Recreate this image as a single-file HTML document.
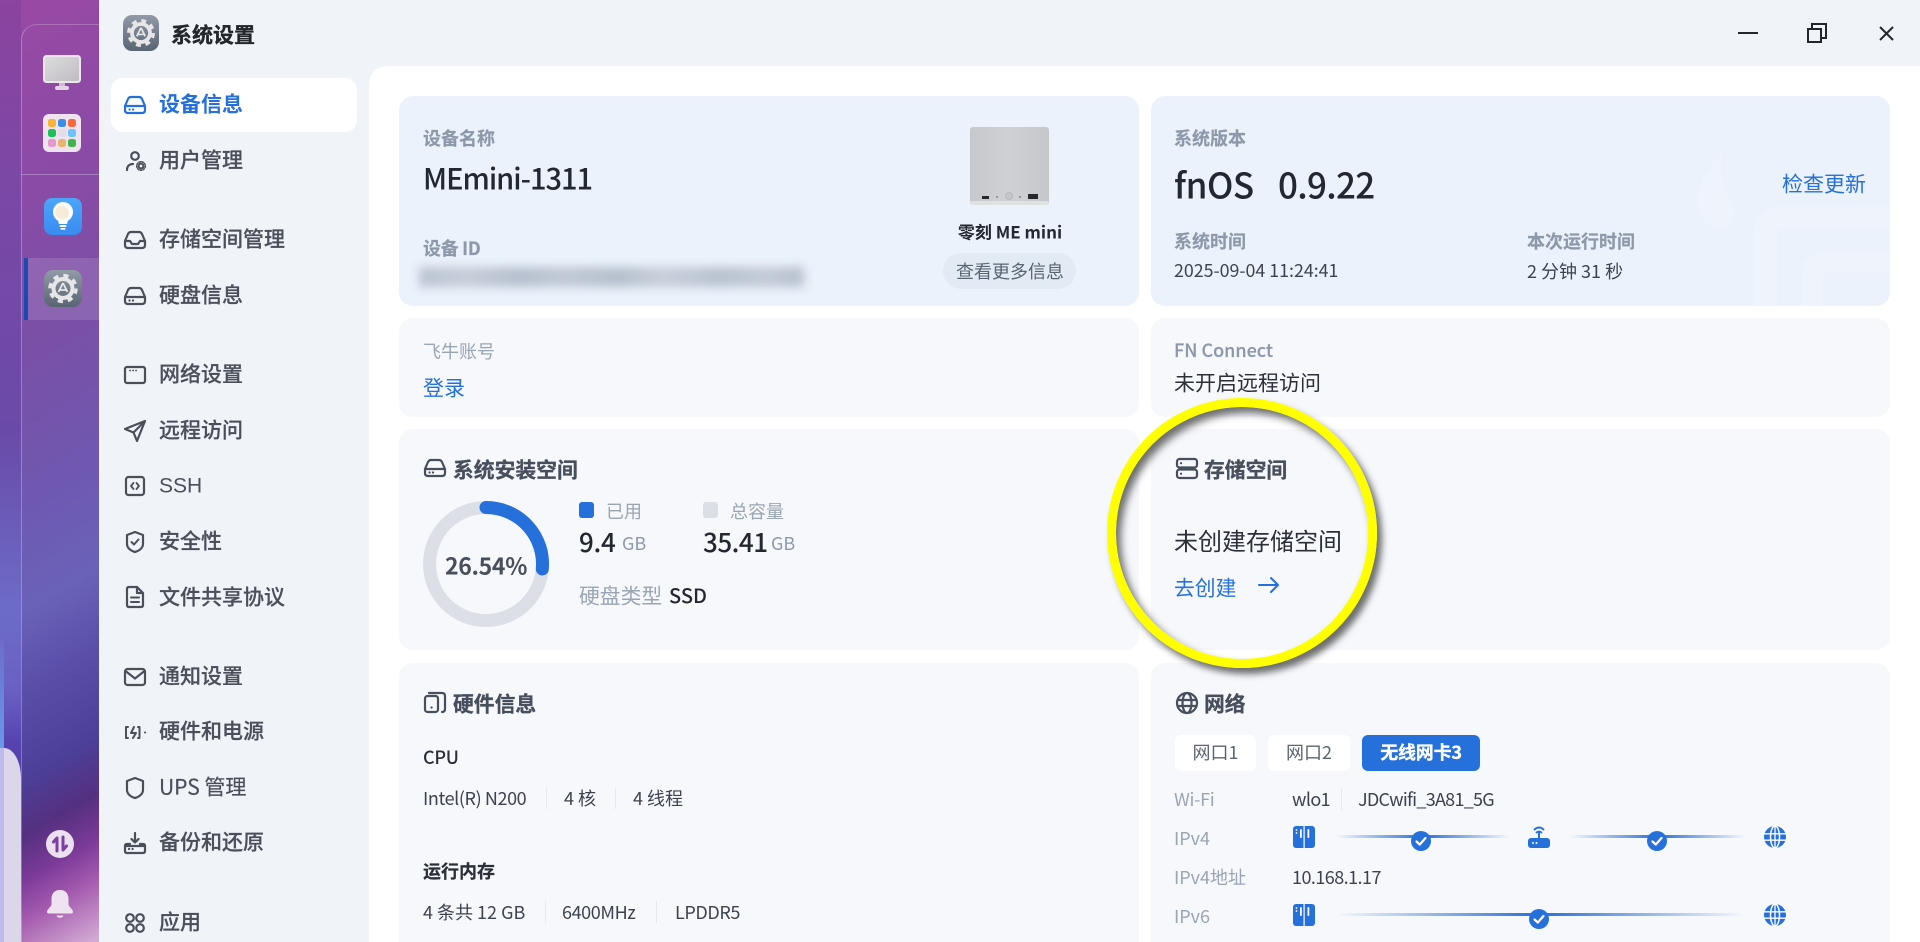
<!DOCTYPE html>
<html lang="zh"><head><meta charset="utf-8"><title>系统设置</title>
<style>
html,body{margin:0;padding:0;width:1920px;height:942px;overflow:hidden;background:#fff}
body{position:relative;font-family:"Liberation Sans","Noto Sans CJK SC",sans-serif;}
.a{position:absolute}
.t{position:absolute;white-space:nowrap;line-height:1;transform:translateY(-50%);font-family:"Noto Sans CJK SC","Liberation Sans",sans-serif}
.n{font-size:21px;color:#4a4f59;left:159px;font-weight:500;-webkit-text-stroke:.2px #4a4f59}
.l{font-size:18px;color:#8d99aa;font-weight:700;-webkit-text-stroke:.2px #8d99aa}
.g{font-size:18px;color:#9aa5b3}
.d{font-size:18px;color:#3c424e}
.h{font-size:20.8px;color:#474e5c;font-weight:700;-webkit-text-stroke:.3px #474e5c}
.b{color:#2670dc}
.card{position:absolute;border-radius:14px;background:#f6f8fc}
.top{background:#ebf2fb}
.sep{position:absolute;width:1px;height:22px;background:#e6e9ef}
svg{position:absolute;overflow:visible}
.ic{fill:none;stroke:#4a4f59;stroke-width:2.2;stroke-linecap:round;stroke-linejoin:round}
.tab{position:absolute;top:735px;height:36px;border-radius:6px;background:#fff;text-align:center;line-height:35px;font-size:18px;color:#5a6472;font-family:"Noto Sans CJK SC","Liberation Sans",sans-serif}
.line{position:absolute;height:3px;}
</style></head><body>

<!-- desktop background -->
<div class="a" style="left:0;top:0;width:99px;height:942px;background:linear-gradient(150deg,#9a49a3 0,#8a4ba6 175px,#7a4fa6 307px,#6f58b0 446px,#6a62b8 540px,#5a4ea9 610px,#4c3f98 688px,#55307f 736px,#7b3a98 775px,#a45aae 809px,#d0a8d2 860px)"></div>
<div class="a" style="left:0;top:0;width:21px;height:942px;background:linear-gradient(180deg,#8b449f 0,#7a48a6 200px,#6a4aa8 430px,#6c6cc8 610px,#6a60c4 690px,#5642ae 745px,#5642ae 942px)"></div>
<div class="a" style="left:0;top:640px;width:4px;height:110px;background:linear-gradient(180deg,#6c6cc8,#6a9be8)"></div>
<div class="a" style="left:0;top:748px;width:4px;height:194px;background:#bcbcec"></div>
<div class="a" style="left:4px;top:748px;width:17px;height:194px;background:#dcd6ea;border-top-right-radius:17px 30px"></div>
<div class="a" style="left:21px;top:24px;width:78px;height:918px;box-sizing:border-box;border-left:1px solid rgba(255,255,255,.28);border-top:1px solid rgba(255,255,255,.22);border-top-left-radius:16px"></div>
<div class="a" style="left:21px;top:174px;width:78px;height:1px;background:rgba(255,255,255,.28)"></div>
<div class="a" style="left:24px;top:258px;width:75px;height:62px;background:rgba(255,255,255,.13)"></div>
<div class="a" style="left:24px;top:258px;width:4px;height:62px;background:#1a4bb0"></div>

<!-- dock icons -->
<svg style="left:43px;top:55px" width="38" height="36" viewBox="0 0 38 36">
<defs><linearGradient id="sc" x1="0" y1="0" x2="1" y2="1"><stop offset="0" stop-color="#dcdcdc"/><stop offset="1" stop-color="#bfbcc2"/></linearGradient></defs>
<rect x="0" y="0" width="38" height="28" rx="3.500" fill="#ece6ee"/><rect x="2" y="2" width="34" height="24" rx="2" fill="url(#sc)"/>
<rect x="16" y="28" width="6" height="4" fill="#cdb8d6"/><rect x="12" y="31" width="14" height="4" rx="2" fill="#e3d3e6"/></svg>
<div class="a" style="left:43px;top:114px;width:38px;height:38px;border-radius:6px;background:#efe3f0"></div>
<svg style="left:47px;top:119px" width="30" height="28" viewBox="0 0 30 28">
<rect x="1" y="0" width="8" height="8" rx="2.500" fill="#f9b233"/><rect x="11" y="0" width="8" height="8" rx="2.500" fill="#3a8ee6"/><rect x="21" y="0" width="8" height="8" rx="2.500" fill="#f5693c"/>
<rect x="1" y="10" width="8" height="8" rx="2.500" fill="#1cc05a"/><rect x="11" y="10" width="8" height="8" rx="2.500" fill="#e2dde8"/><rect x="21" y="10" width="8" height="8" rx="2.500" fill="#6cc4fb"/>
<rect x="1" y="20" width="8" height="8" rx="2.500" fill="#e59acb"/><rect x="11" y="20" width="8" height="8" rx="2.500" fill="#e8b56f"/><rect x="21" y="20" width="8" height="8" rx="2.500" fill="#3fb34f"/></svg>
<div class="a" style="left:44px;top:198px;width:38px;height:37px;border-radius:8px;background:linear-gradient(180deg,#4ba6f8,#3a8bf0)"></div>
<svg style="left:44px;top:198px" width="38" height="37" viewBox="0 0 38 37">
<circle cx="19" cy="14" r="10" fill="#fff"/><path d="M13.500 21h11l-1.500 5h-8z" fill="#fff"/><rect x="15.500" y="27" width="7" height="2" rx="1" fill="#fff"/><rect x="16.500" y="30" width="5" height="1.800" rx=".9" fill="#fff"/>
<circle cx="18" cy="14.500" r="7" fill="#f7ecd8"/></svg>
<!-- settings app dock -->
<div class="a" style="left:44px;top:270px;width:38px;height:37px;border-radius:9px;background:linear-gradient(180deg,#929aa8,#596474)"></div>
<svg style="left:44px;top:270px" width="38" height="37" viewBox="0 0 38 37">
<circle cx="19" cy="18.500" r="13" fill="none" stroke="#e6e6e8" stroke-width="3.500" stroke-dasharray="5.200 5"/>
<circle cx="19" cy="18.500" r="9.500" fill="none" stroke="#e6e6e8" stroke-width="4"/>
<path d="M19 13l-4.500 9M19 13l4.500 9M15.500 20h7" stroke="#e6e6e8" stroke-width="1.800" fill="none"/></svg>
<div class="a" style="left:46px;top:830px;width:28px;height:28px;border-radius:50%;background:#ecdff0"></div>
<svg style="left:46px;top:830px" width="28" height="28" viewBox="0 0 28 28"><path d="M11 21V8L7.500 12M17 7v13l3.500-4" fill="none" stroke="#7a3fa0" stroke-width="3" stroke-linecap="round" stroke-linejoin="round"/></svg>
<svg style="left:47px;top:890px" width="26" height="30" viewBox="0 0 26 30"><path d="M13 0c6 0 8.500 4 8.500 9v5c0 3 4.500 5 4.500 8 0 1-.7 1.500-2 1.500H2c-1.300 0-2-.5-2-1.500 0-3 4.500-5 4.500-8V9C4.500 4 7 0 13 0z" fill="#efe3f1"/><path d="M9.500 25.500c1 3 6 3 7 0z" fill="#efe3f1"/></svg>

<!-- window -->
<div class="a" style="left:99px;top:0;width:1821px;height:942px;background:#f0f4f9"></div>
<div class="a" style="left:369px;top:66px;width:1551px;height:876px;background:#fff;border-top-left-radius:18px"></div>

<!-- title -->
<div class="a" style="left:123px;top:15px;width:36px;height:36px;border-radius:9px;background:linear-gradient(180deg,#929aa8,#596474)"></div>
<svg style="left:123px;top:15px" width="36" height="36" viewBox="0 0 38 37">
<circle cx="19" cy="18.500" r="13" fill="none" stroke="#e6e6e8" stroke-width="3.500" stroke-dasharray="5.200 5"/>
<circle cx="19" cy="18.500" r="9.500" fill="none" stroke="#e6e6e8" stroke-width="4"/>
<path d="M19 13l-4.500 9M19 13l4.500 9M15.500 20h7" stroke="#e6e6e8" stroke-width="1.800" fill="none"/></svg>
<div class="t" style="left:171px;top:35px;font-size:21px;font-weight:700;color:#23262c;-webkit-text-stroke:.35px #23262c">系统设置</div>

<!-- window controls -->
<div class="a" style="left:1738px;top:32px;width:20px;height:2px;background:#23262c"></div>
<svg style="left:1807px;top:23px" width="20" height="20" viewBox="0 0 20 20" fill="none" stroke="#23262c" stroke-width="2"><path d="M5 5V1h14v14h-5"/><rect x="1" y="6" width="13" height="13"/></svg>
<svg style="left:1879px;top:26px" width="15" height="15" viewBox="0 0 15 15" fill="none" stroke="#23262c" stroke-width="2"><path d="M1 1l13 13M14 1L1 14"/></svg>

<!-- nav -->
<div class="a" style="left:111px;top:78px;width:246px;height:54px;background:#fff;border-radius:12px"></div>
<svg class="ic" style="left:124px;top:96px;stroke:#2670dc" width="22" height="18" viewBox="0 0 22 18"><path d="M1 10L4 3Q5 1 7 1H15Q17 1 18 3L21 10V14Q21 17 18 17H4Q1 17 1 14ZM1 10H21"/><path d="M5.500 13.500h.1M9 13.500h.1"/></svg>
<div class="t n b" style="top:103.500px;font-weight:700;color:#2670dc;-webkit-text-stroke:0">设备信息</div>
<svg class="ic" style="left:126px;top:151px" width="20" height="20" viewBox="0 0 20 20"><circle cx="9" cy="5" r="3.800"/><path d="M1 19c0-4 2.500-6 6-6"/><circle cx="15" cy="15" r="2.400" stroke-width="2"/><circle cx="15" cy="15" r="4.300" stroke-width="1.500" stroke-dasharray="1.500 1.500"/></svg>
<div class="t n" style="top:160px">用户管理</div>
<svg class="ic" style="left:124px;top:231px" width="22" height="18" viewBox="0 0 22 18"><path d="M1 10L4 3Q5 1 7 1H15Q17 1 18 3L21 10V14Q21 17 18 17H4Q1 17 1 14ZM1 10H6L8 13H14L16 10H21"/></svg>
<div class="t n" style="top:238.500px">存储空间管理</div>
<svg class="ic" style="left:124px;top:287px" width="22" height="18" viewBox="0 0 22 18"><path d="M1 10L4 3Q5 1 7 1H15Q17 1 18 3L21 10V14Q21 17 18 17H4Q1 17 1 14ZM1 10H21"/><path d="M5.500 13.500h.1M9 13.500h.1"/></svg>
<div class="t n" style="top:295px">硬盘信息</div>
<svg class="ic" style="left:124px;top:366px" width="22" height="18" viewBox="0 0 22 18"><rect x="1" y="1" width="20" height="16" rx="2"/><path d="M6 4.500h.1M9 4.500h.1M12 4.500h.1" stroke-width="1.800"/></svg>
<div class="t n" style="top:374px">网络设置</div>
<svg class="ic" style="left:124px;top:420px" width="22" height="22" viewBox="0 0 22 22"><path d="M21 1L1 9L9.500 12.500L13 21ZM9.500 12.500L21 1"/></svg>
<div class="t n" style="top:430px">远程访问</div>
<svg class="ic" style="left:125px;top:476px" width="20" height="20" viewBox="0 0 20 20"><rect x="1" y="1" width="18" height="18" rx="2.500"/><path d="M8.500 7L6 10l2.500 3M11.500 7L14 10l-2.500 3" stroke-width="1.800"/></svg>
<div class="t n" style="top:486px;font-family:'Liberation Sans','Noto Sans CJK SC',sans-serif;font-weight:400;font-size:21px;-webkit-text-stroke:0">SSH</div>
<svg class="ic" style="left:126px;top:531px" width="18" height="22" viewBox="0 0 18 22"><path d="M9 1L17 4V13C17 17 13 20 9 21C5 20 1 17 1 13V4Z"/><path d="M5.500 11L8 13.500L12.500 8.500" stroke-width="2"/></svg>
<div class="t n" style="top:541px">安全性</div>
<svg class="ic" style="left:126px;top:586px" width="18" height="22" viewBox="0 0 18 22"><path d="M3 1H11L17 7V19Q17 21 15 21H3Q1 21 1 19V3Q1 1 3 1ZM11 1V7H17"/><path d="M5 11.500H13M5 16H13" stroke-width="2"/></svg>
<div class="t n" style="top:596.500px">文件共享协议</div>
<svg class="ic" style="left:124px;top:668px" width="22" height="18" viewBox="0 0 22 18"><rect x="1" y="1" width="20" height="16" rx="2.500"/><path d="M1.500 3L11 10.500L20.500 3"/></svg>
<div class="t n" style="top:676px">通知设置</div>
<svg class="ic" style="left:124px;top:726px" width="22" height="13" viewBox="0 0 22 13"><path d="M4 1H2V12H4M10 1L7 7H12L9 12M14 1H15.500V12H14" stroke-width="2"/><path d="M21 6.500h.1" stroke-width="2"/></svg>
<div class="t n" style="top:731px">硬件和电源</div>
<svg class="ic" style="left:126px;top:777px" width="18" height="22" viewBox="0 0 18 22"><path d="M9 1L17 4V13C17 17 13 20 9 21C5 20 1 17 1 13V4Z"/></svg>
<div class="t n" style="top:787px;font-weight:400">UPS 管理</div>
<svg class="ic" style="left:124px;top:832px" width="22" height="22" viewBox="0 0 22 22"><path d="M11 1V10M7.500 7L11 10.500L14.500 7M6 12H3Q1 12 1 14V19Q1 21 3 21H19Q21 21 21 19V14Q21 12 19 12H16M1 14H21" /><path d="M5 17h.1M8.500 17h.1"/></svg>
<div class="t n" style="top:841.500px">备份和还原</div>
<svg class="ic" style="left:125px;top:913px" width="20" height="20" viewBox="0 0 20 20"><circle cx="5" cy="5" r="3.800"/><circle cx="15" cy="5" r="3.800"/><circle cx="5" cy="15" r="3.800"/><circle cx="15" cy="15" r="3.800"/></svg>
<div class="t n" style="top:922px">应用</div>

<!-- cards -->
<div class="card top" style="left:399px;top:96px;width:740px;height:210px"></div>
<div class="card top" style="left:1151px;top:96px;width:739px;height:210px;overflow:hidden">
<svg style="left:0;top:0" width="739" height="210" viewBox="0 0 739 210" fill="none"><path d="M572 57C540 85 538 120 566 134C590 128 585 112 576 98C570 85 568 72 572 57Z" fill="#eff4fc"/><path d="M614.500 215V136Q614.500 122 630 122H745" stroke="#eff4fc" stroke-width="23"/><path d="M662 215V175Q662 167 672 167H745" stroke="#eff4fc" stroke-width="20"/></svg></div>
<div class="card" style="left:399px;top:318px;width:740px;height:99px"></div>
<div class="card" style="left:1151px;top:318px;width:739px;height:99px"></div>
<div class="card" style="left:399px;top:429px;width:740px;height:221px"></div>
<div class="card" style="left:1151px;top:429px;width:739px;height:221px"></div>
<div class="card" style="left:399px;top:663px;width:740px;height:300px"></div>
<div class="card" style="left:1151px;top:663px;width:739px;height:300px"></div>

<!-- device card -->
<div class="t l" style="left:423px;top:138px">设备名称</div>
<div class="t" style="left:423px;top:178px;font-size:29px;font-weight:500;color:#23272f;letter-spacing:-1px">MEmini-1311</div>
<div class="t l" style="left:423px;top:248px;letter-spacing:-.3px">设备 ID</div>
<div class="a" style="left:419px;top:267px;width:385px;height:20px;filter:blur(5px);background:linear-gradient(90deg,#b9c2d0 0,#c6cdd9 12%,#b5bfcd 26%,#c0c8d5 38%,#b4becc 52%,#c8cfda 63%,#b8c1cf 78%,#c2cad6 90%,#b6c0ce 100%)"></div>
<svg style="left:970px;top:127px" width="79" height="79" viewBox="0 0 79 79">
<defs><linearGradient id="dv" x1="0" x2="1" y1="0" y2="0"><stop offset="0" stop-color="#c6c8cc"/><stop offset=".5" stop-color="#cfd1d4"/><stop offset="1" stop-color="#c5c7cb"/></linearGradient></defs>
<rect width="79" height="78" rx="3" fill="url(#dv)"/><rect y="74" width="79" height="4" rx="2" fill="#dfe1e3"/>
<rect x="12" y="69" width="7" height="3" fill="#26282c"/><circle cx="27" cy="70" r=".7" fill="#444"/><circle cx="39" cy="69" r="3.500" fill="#c4c6ca" stroke="#aaa" stroke-width=".6"/><circle cx="50" cy="70" r=".7" fill="#444"/><rect x="58" y="67" width="10" height="5" fill="#26282c"/></svg>
<div class="t" style="left:1010px;top:231px;font-size:17px;font-weight:700;color:#23272f;transform:translate(-50%,-50%)">零刻 ME mini</div>
<div class="a" style="left:943px;top:253px;width:133px;height:36px;border-radius:18px;background:#e2eaf4"></div>
<div class="t" style="left:1010px;top:271px;font-size:18px;color:#5a6472;transform:translate(-50%,-50%)">查看更多信息</div>

<!-- system card -->
<div class="t l" style="left:1174px;top:138px">系统版本</div>
<div class="t" style="left:1174px;top:184px;font-size:35px;font-weight:500;color:#23272f;letter-spacing:-.5px">fnOS</div>
<div class="t" style="left:1278px;top:184px;font-size:35px;font-weight:500;color:#23272f;letter-spacing:-.7px">0.9.22</div>
<div class="t b" style="left:1782px;top:184px;font-size:21px">检查更新</div>
<div class="t l" style="left:1174px;top:241px">系统时间</div>
<div class="t l" style="left:1527px;top:241px">本次运行时间</div>
<div class="t d" style="left:1174px;top:271px;font-size:17.800px">2025-09-04 11:24:41</div>
<div class="t d" style="left:1527px;top:271px;font-size:18px">2 分钟 31 秒</div>

<!-- account -->
<div class="t g" style="left:423px;top:351px">飞牛账号</div>
<div class="t b" style="left:423px;top:388px;font-size:21px">登录</div>
<div class="t l" style="left:1174px;top:350px;font-weight:500;-webkit-text-stroke:.2px #8d99aa">FN Connect</div>
<div class="t" style="left:1174px;top:383px;font-size:21px;color:#2a2f38">未开启远程访问</div>

<!-- system space -->
<svg class="ic" style="left:424px;top:459px;stroke:#474e5c" width="22" height="18" viewBox="0 0 22 18"><path d="M1 10L4 3Q5 1 7 1H15Q17 1 18 3L21 10V14Q21 17 18 17H4Q1 17 1 14ZM1 10H21"/><path d="M5.500 13.500h.1M9 13.500h.1"/></svg>
<div class="t h" style="left:453px;top:469px">系统安装空间</div>
<svg style="left:423px;top:501px" width="126" height="126" viewBox="0 0 126 126"><circle cx="63" cy="63" r="56.500" fill="none" stroke="#dcdfe6" stroke-width="13"/><path d="M63 6.500A56.500 56.500 0 0 1 119.300 68" fill="none" stroke="#2670dc" stroke-width="13" stroke-linecap="round"/></svg>
<div class="t" style="left:486px;top:565px;font-size:23px;font-weight:700;color:#474e5c;transform:translate(-50%,-50%);letter-spacing:-.3px">26.54%</div>
<div class="a" style="left:579px;top:502px;width:15px;height:16px;border-radius:3px;background:#2670dc"></div>
<div class="t g" style="left:606px;top:510.500px">已用</div>
<div class="a" style="left:703px;top:502px;width:15px;height:16px;border-radius:3px;background:#dcdfe6"></div>
<div class="t g" style="left:730px;top:510.500px">总容量</div>
<div class="t" style="left:579px;top:542px;font-size:26px;font-weight:500;color:#23272f;letter-spacing:-.3px">9.4</div>
<div class="t" style="left:622px;top:543px;font-size:18px;color:#8d99aa">GB</div>
<div class="t" style="left:703px;top:542px;font-size:26px;font-weight:500;color:#23272f;letter-spacing:-.5px">35.41</div>
<div class="t" style="left:771px;top:543px;font-size:18px;color:#8d99aa">GB</div>
<div class="t g" style="left:579px;top:595px;font-size:20.800px">硬盘类型</div>
<div class="t" style="left:669px;top:595px;font-size:20px;font-weight:500;color:#23272f">SSD</div>

<!-- storage -->
<svg class="ic" style="left:1176px;top:458px;stroke:#474e5c" width="22" height="21" viewBox="0 0 22 21"><rect x="1" y="1" width="20" height="8.500" rx="2.500"/><rect x="1" y="11.500" width="20" height="8.500" rx="2.500"/><path d="M5 5.200h.1M5 15.700h.1"/></svg>
<div class="t h" style="left:1204px;top:469px">存储空间</div>
<div class="t" style="left:1174px;top:540px;font-size:24px;color:#2a2f38">未创建存储空间</div>
<div class="t b" style="left:1174px;top:587px;font-size:20.800px">去创建</div>
<svg style="left:1258px;top:576px" width="21" height="18" viewBox="0 0 21 18" fill="none" stroke="#2670dc" stroke-width="2" stroke-linecap="round" stroke-linejoin="round"><path d="M1 9H20M13 2L20 9L13 16"/></svg>

<!-- hardware -->
<svg class="ic" style="left:424px;top:692px;stroke:#474e5c" width="22" height="21" viewBox="0 0 22 21"><path d="M5 1H18Q21 1 21 4V17Q21 20 18 20"/><rect x="1" y="4" width="13" height="16" rx="2.500"/><path d="M7.500 15.500h.1"/></svg>
<div class="t h" style="left:453px;top:703px">硬件信息</div>
<div class="t" style="left:423px;top:757px;font-size:18px;font-weight:500;color:#2a2f38;letter-spacing:-.3px">CPU</div>
<div class="t d" style="left:423px;top:798px;letter-spacing:-.4px">Intel(R) N200</div><div class="sep" style="left:546px;top:787px"></div>
<div class="t d" style="left:564px;top:798px">4 核</div><div class="sep" style="left:615px;top:787px"></div>
<div class="t d" style="left:633px;top:798px">4 线程</div>
<div class="t" style="left:423px;top:871px;font-size:18px;font-weight:700;color:#2a2f38;-webkit-text-stroke:.2px #2a2f38">运行内存</div>
<div class="t d" style="left:423px;top:912px">4 条共 12 GB</div><div class="sep" style="left:545px;top:901px"></div>
<div class="t d" style="left:562px;top:912px;letter-spacing:-.4px">6400MHz</div><div class="sep" style="left:656px;top:901px"></div>
<div class="t d" style="left:675px;top:912px;letter-spacing:-.4px">LPDDR5</div>

<!-- network -->
<svg class="ic" style="left:1176px;top:692px;stroke:#474e5c" width="22" height="22" viewBox="0 0 22 22"><circle cx="11" cy="11" r="10"/><ellipse cx="11" cy="11" rx="4.500" ry="10"/><path d="M1.500 8H20.500M1.500 14H20.500"/></svg>
<div class="t h" style="left:1204px;top:703px">网络</div>
<div class="tab" style="left:1175px;width:81px">网口1</div>
<div class="tab" style="left:1268px;width:82px">网口2</div>
<div class="tab" style="left:1362px;width:118px;background:#2670dc;color:#fff;font-weight:700;-webkit-text-stroke:.3px #fff;letter-spacing:-.2px">无线网卡3</div>
<div class="t g" style="left:1174px;top:799px;letter-spacing:-.3px">Wi-Fi</div>
<div class="t d" style="left:1292px;top:799px;letter-spacing:-.6px">wlo1</div><div class="sep" style="left:1341px;top:788px"></div>
<div class="t d" style="left:1358px;top:799px;letter-spacing:-.73px">JDCwifi_3A81_5G</div>
<div class="t g" style="left:1174px;top:838px">IPv4</div>
<div class="t g" style="left:1174px;top:877px">IPv4地址</div>
<div class="t d" style="left:1292px;top:877px;letter-spacing:-.55px">10.168.1.17</div>
<div class="t g" style="left:1174px;top:916px">IPv6</div>

<!-- network icons -->
<svg style="left:1293px;top:826px" width="22" height="22" viewBox="0 0 22 22"><rect width="22" height="22" rx="3" fill="#2670dc"/><rect x="7" y="3" width="1.800" height="9" rx=".9" fill="#fff"/><rect x="14.500" y="3" width="1.800" height="9" rx=".9" fill="#fff"/><path d="M10.500 0h1.200v22h-1.200z" fill="#fff"/><circle cx="3.500" cy="4" r=".9" fill="#fff"/><circle cx="3.500" cy="7" r=".9" fill="#fff"/></svg>
<svg style="left:1293px;top:904px" width="22" height="22" viewBox="0 0 22 22"><rect width="22" height="22" rx="3" fill="#2670dc"/><rect x="7" y="3" width="1.800" height="9" rx=".9" fill="#fff"/><rect x="14.500" y="3" width="1.800" height="9" rx=".9" fill="#fff"/><path d="M10.500 0h1.200v22h-1.200z" fill="#fff"/><circle cx="3.500" cy="4" r=".9" fill="#fff"/><circle cx="3.500" cy="7" r=".9" fill="#fff"/></svg>
<svg style="left:1528px;top:826px" width="22" height="22" viewBox="0 0 22 22"><rect y="12" width="22" height="10" rx="3" fill="#2670dc"/><rect x="10" y="6" width="2" height="7" fill="#2670dc"/><path d="M6.500 3.500Q11 -.5 15.500 3.500" fill="none" stroke="#2670dc" stroke-width="1.900" stroke-linecap="round"/><path d="M8.500 6.500Q11 4.500 13.500 6.500" fill="none" stroke="#2670dc" stroke-width="1.800" stroke-linecap="round"/><circle cx="5" cy="17" r="1" fill="#fff"/><circle cx="8.500" cy="17" r="1" fill="#fff"/></svg>
<svg style="left:1764px;top:826px" width="22" height="22" viewBox="0 0 22 22"><circle cx="11" cy="11" r="11" fill="#2670dc"/><ellipse cx="11" cy="11" rx="4.500" ry="11" fill="none" stroke="#fff" stroke-width="1.500"/><path d="M0 7.800H22M0 14.200H22M11 0V22" stroke="#fff" stroke-width="1.300"/></svg>
<svg style="left:1764px;top:904px" width="22" height="22" viewBox="0 0 22 22"><circle cx="11" cy="11" r="11" fill="#2670dc"/><ellipse cx="11" cy="11" rx="4.500" ry="11" fill="none" stroke="#fff" stroke-width="1.500"/><path d="M0 7.800H22M0 14.200H22M11 0V22" stroke="#fff" stroke-width="1.300"/></svg>

<div class="line" style="left:1336px;top:835px;width:174px;background:linear-gradient(90deg,rgba(38,112,220,0),#2670dc 50%,rgba(38,112,220,0))"></div>
<div class="line" style="left:1570px;top:835px;width:175px;background:linear-gradient(90deg,rgba(38,112,220,0),#2670dc 50%,rgba(38,112,220,0))"></div>
<div class="line" style="left:1336px;top:913px;width:409px;background:linear-gradient(90deg,rgba(38,112,220,0),#2670dc 50%,rgba(38,112,220,0))"></div>
<svg style="left:1411px;top:831px" width="20" height="20" viewBox="0 0 20 20"><circle cx="10" cy="10" r="10" fill="#2670dc"/><path d="M5.500 10.500L8.800 13.500L14.500 7" fill="none" stroke="#fff" stroke-width="2.200" stroke-linecap="round" stroke-linejoin="round"/></svg>
<svg style="left:1647px;top:831px" width="20" height="20" viewBox="0 0 20 20"><circle cx="10" cy="10" r="10" fill="#2670dc"/><path d="M5.500 10.500L8.800 13.500L14.500 7" fill="none" stroke="#fff" stroke-width="2.200" stroke-linecap="round" stroke-linejoin="round"/></svg>
<svg style="left:1529px;top:909px" width="20" height="20" viewBox="0 0 20 20"><circle cx="10" cy="10" r="10" fill="#2670dc"/><path d="M5.500 10.500L8.800 13.500L14.500 7" fill="none" stroke="#fff" stroke-width="2.200" stroke-linecap="round" stroke-linejoin="round"/></svg>

<!-- yellow annotation ring -->
<div class="a" style="left:1107px;top:398px;width:270px;height:270px;box-sizing:border-box;border-radius:50%;border:9px solid #ffff00;box-shadow:5px 6px 7px rgba(50,50,50,.7),inset 5px 6px 8px rgba(50,50,50,.7)"></div>
</body></html>
